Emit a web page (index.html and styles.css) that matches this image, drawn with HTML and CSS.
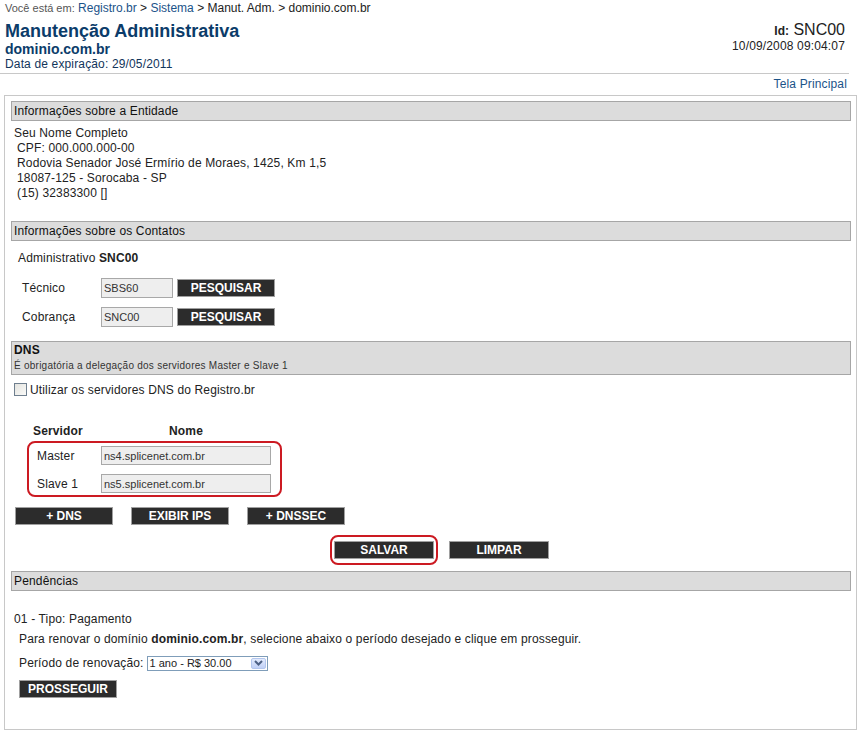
FILE: index.html
```html
<!DOCTYPE html>
<html lang="pt-BR">
<head>
    <meta charset="UTF-8">
    <title>Manutenção Administrativa</title>
    <link rel="stylesheet" href="styles.css">
</head>
<body>

    <!-- Breadcrumb -->
    <div class="crumb">
        <span class="crumb-label">Você está em:</span>
        <a href="#">Registro.br</a> &gt; <a href="#">Sistema</a> &gt; Manut. Adm. &gt; dominio.com.br
    </div>

    <!-- Header -->
    <div class="top">
        <div class="top-left">
            <div class="title">Manutenção Administrativa</div>
            <div class="domain">dominio.com.br</div>
            <div class="expire">Data de expiração: 29/05/2011</div>
        </div>
        <div class="top-right">
            <div class="user-id"><b>Id:</b> SNC00</div>
            <div class="stamp">10/09/2008 09:04:07</div>
        </div>
    </div>

    <div class="home-link"><a href="#">Tela Principal</a></div>

    <div class="page-box">

        <!-- Entidade -->
        <div class="sec-head">Informações sobre a Entidade</div>
        <div class="entity">
            <div>Seu Nome Completo</div>
            <div class="indent">CPF: 000.000.000-00</div>
            <div class="indent">Rodovia Senador José Ermírio de Moraes, 1425, Km 1,5</div>
            <div class="indent">18087-125 - Sorocaba - SP</div>
            <div class="indent">(15) 32383300 []</div>
        </div>

        <!-- Contatos -->
        <div class="sec-head">Informações sobre os Contatos</div>
        <div class="admin">Administrativo <b>SNC00</b></div>
        <div class="contact-row">
            <span class="contact-label">Técnico</span>
            <input class="field short" type="text" value="SBS60" readonly>
            <button class="btn">PESQUISAR</button>
        </div>
        <div class="contact-row second">
            <span class="contact-label">Cobrança</span>
            <input class="field short" type="text" value="SNC00" readonly>
            <button class="btn">PESQUISAR</button>
        </div>

        <!-- DNS -->
        <div class="sec-head tall">
            <div class="dns-title">DNS</div>
            <div class="dns-sub">É obrigatória a delegação dos servidores Master e Slave 1</div>
        </div>
        <div class="check-row">
            <span class="checkbox"></span>
            <span>Utilizar os servidores DNS do Registro.br</span>
        </div>

        <div class="dns-head">
            <span class="col-server">Servidor</span>
            <span class="col-name">Nome</span>
        </div>
        <div class="dns-box">
            <div class="dns-row">
                <span class="dns-label">Master</span>
                <input class="field long" type="text" value="ns4.splicenet.com.br" readonly>
            </div>
            <div class="dns-row second">
                <span class="dns-label">Slave 1</span>
                <input class="field long" type="text" value="ns5.splicenet.com.br" readonly>
            </div>
        </div>

        <div class="dns-buttons">
            <button class="btn">+ DNS</button>
            <button class="btn">EXIBIR IPS</button>
            <button class="btn">+ DNSSEC</button>
        </div>

        <div class="save-row">
            <div class="save-box"><button class="btn">SALVAR</button></div>
            <button class="btn">LIMPAR</button>
        </div>

        <!-- Pendências -->
        <div class="sec-head">Pendências</div>
        <div class="pend-title">01 - Tipo: Pagamento</div>
        <div class="pend-text">Para renovar o domínio <b>dominio.com.br</b>, selecione abaixo o período desejado e clique em prosseguir.</div>
        <div class="period-row">
            <span>Período de renovação:</span>
            <span class="select">
                <span class="select-text">1 ano - R$ 30.00</span>
                <span class="select-arrow">
                    <svg width="9" height="6" viewBox="0 0 9 6"><path d="M1 1 L4.5 4.5 L8 1" fill="none" stroke="#4d6185" stroke-width="2"/></svg>
                </span>
            </span>
        </div>
        <div class="pend-button">
            <button class="btn">PROSSEGUIR</button>
        </div>
    </div>

</body>
</html>
```

FILE: styles.css
```css
/* Base */
* {
    box-sizing: border-box;
}

body {
    margin: 0;
    font-family: "Liberation Sans", Arial, sans-serif;
    font-size: 12px;
    letter-spacing: 0.15px;
    color: #222;
    background: #fff;
}

a {
    color: #1b5389;
    text-decoration: none;
}

/* Breadcrumb */
.crumb {
    font-size: 12px;
    line-height: 14px;
    letter-spacing: 0;
    padding: 1px 5px 0;
    color: #222;
}

.crumb-label {
    font-size: 11px;
    color: #555;
}

/* Header */
.top {
    display: flex;
    justify-content: space-between;
    width: 849px;
    padding: 6px 4px 0 5px;
    border-bottom: 1px solid #c8c8c8;
}

.title {
    font-size: 18px;
    line-height: 20px;
    font-weight: bold;
    letter-spacing: 0;
    color: #0b3c6a;
}

.domain {
    font-size: 14px;
    line-height: 16px;
    font-weight: bold;
    letter-spacing: 0;
    color: #0b3c6a;
}

.expire {
    line-height: 15px;
    color: #12355b;
    padding-bottom: 1px;
}

.top-right {
    text-align: right;
    color: #222;
    padding-top: 1px;
}

.user-id {
    font-size: 16px;
    line-height: 16px;
    letter-spacing: 0;
}

.user-id b {
    font-size: 12px;
}

.stamp {
    line-height: 15px;
}

.home-link {
    width: 847px;
    text-align: right;
    line-height: 14px;
    padding-top: 3px;
}

/* Main box */
.page-box {
    margin: 4px 0 0 4px;
    width: 853px;
    height: 635px;
    border: 1px solid #c8c8c8;
    padding: 5px 5px 0 6px;
}

.sec-head {
    height: 20px;
    border: 1px solid #a6a6a6;
    background: #dcdcdc;
    padding: 0 2px;
    line-height: 18px;
    color: #111;
}

.sec-head.tall {
    height: 34px;
    padding-top: 1px;
}

.dns-title {
    font-weight: bold;
    line-height: 15px;
}

.dns-sub {
    font-size: 10px;
    line-height: 16px;
    letter-spacing: 0.25px;
    color: #333;
}

/* Entidade */
.entity {
    margin: 5px 0 20px;
    padding-left: 3px;
    line-height: 15px;
}

.entity .indent {
    padding-left: 3px;
}

/* Contatos */
.admin {
    padding: 10px 0 0 7px;
    line-height: 14px;
}

.contact-row {
    display: flex;
    align-items: center;
    margin-top: 13px;
    padding-left: 11px;
    height: 20px;
}

.contact-row.second {
    margin-top: 9px;
    margin-bottom: 14px;
}

.contact-label {
    width: 79px;
}

.field {
    height: 20px;
    border: 1px solid #a8a8a8;
    background: #eeeeee;
    font-family: "Liberation Sans", Arial, sans-serif;
    font-size: 11px;
    color: #333;
    padding: 0 2px;
    margin: 0;
}

.field.short {
    width: 72px;
    margin-right: 4px;
}

.field.long {
    width: 170px;
    height: 19px;
}

.btn {
    width: 98px;
    height: 18px;
    margin: 0;
    padding: 0;
    border: 1px solid #a0a0a0;
    background: #2c2c2c;
    color: #fff;
    font-family: "Liberation Sans", Arial, sans-serif;
    font-size: 12px;
    font-weight: bold;
    line-height: 16px;
    cursor: pointer;
}

/* DNS */
.check-row {
    display: flex;
    align-items: center;
    gap: 3px;
    margin-top: 8px;
    padding-left: 3px;
    height: 13px;
}

.checkbox {
    width: 13px;
    height: 13px;
    border: 1px solid #6f7f8f;
    background: linear-gradient(135deg, #e4e4e0, #fafaf8);
}

.dns-head {
    display: flex;
    margin-top: 28px;
    padding-left: 22px;
    line-height: 14px;
    font-weight: bold;
}

.col-server {
    width: 68px;
}

.col-name {
    width: 170px;
    text-align: center;
}

.dns-box {
    margin: 3px 0 0 16px;
    width: 255px;
    height: 56px;
    border: 2px solid #cc1a22;
    border-radius: 8px;
    padding: 3px 8px 0 8px;
}

.dns-row {
    display: flex;
    align-items: center;
}

.dns-row.second {
    margin-top: 9px;
}

.dns-label {
    width: 64px;
}

.dns-buttons {
    display: flex;
    gap: 18px;
    margin-top: 10px;
    padding-left: 4px;
}

.save-row {
    display: flex;
    align-items: center;
    gap: 11px;
    margin: 10px 0 6px;
    padding-left: 319px;
}

.save-box {
    width: 108px;
    height: 30px;
    border: 2px solid #cc1a22;
    border-radius: 8px;
    padding: 4px 0 0 2px;
}

.save-box .btn {
    width: 100px;
}

.save-row > .btn {
    width: 100px;
}

/* Pendências */
.pend-title {
    margin-top: 21px;
    padding-left: 3px;
    line-height: 14px;
}

.pend-text {
    margin-top: 6px;
    padding-left: 8px;
    line-height: 14px;
}

.period-row {
    display: flex;
    align-items: center;
    gap: 3px;
    margin-top: 9px;
    padding-left: 8px;
    height: 16px;
}

.select {
    display: flex;
    align-items: center;
    justify-content: space-between;
    width: 121px;
    height: 15px;
    border: 1px solid #7f9db9;
    background: #fff;
    padding: 0 1px 0 2px;
    font-size: 11px;
    letter-spacing: 0;
}

.select-arrow {
    display: flex;
    align-items: center;
    justify-content: center;
    width: 15px;
    height: 11px;
    border: 1px solid #b3c6ee;
    border-radius: 2px;
    background: linear-gradient(#e3ebfd, #c0d0f6);
}

.pend-button {
    margin-top: 9px;
    padding-left: 8px;
}
```
